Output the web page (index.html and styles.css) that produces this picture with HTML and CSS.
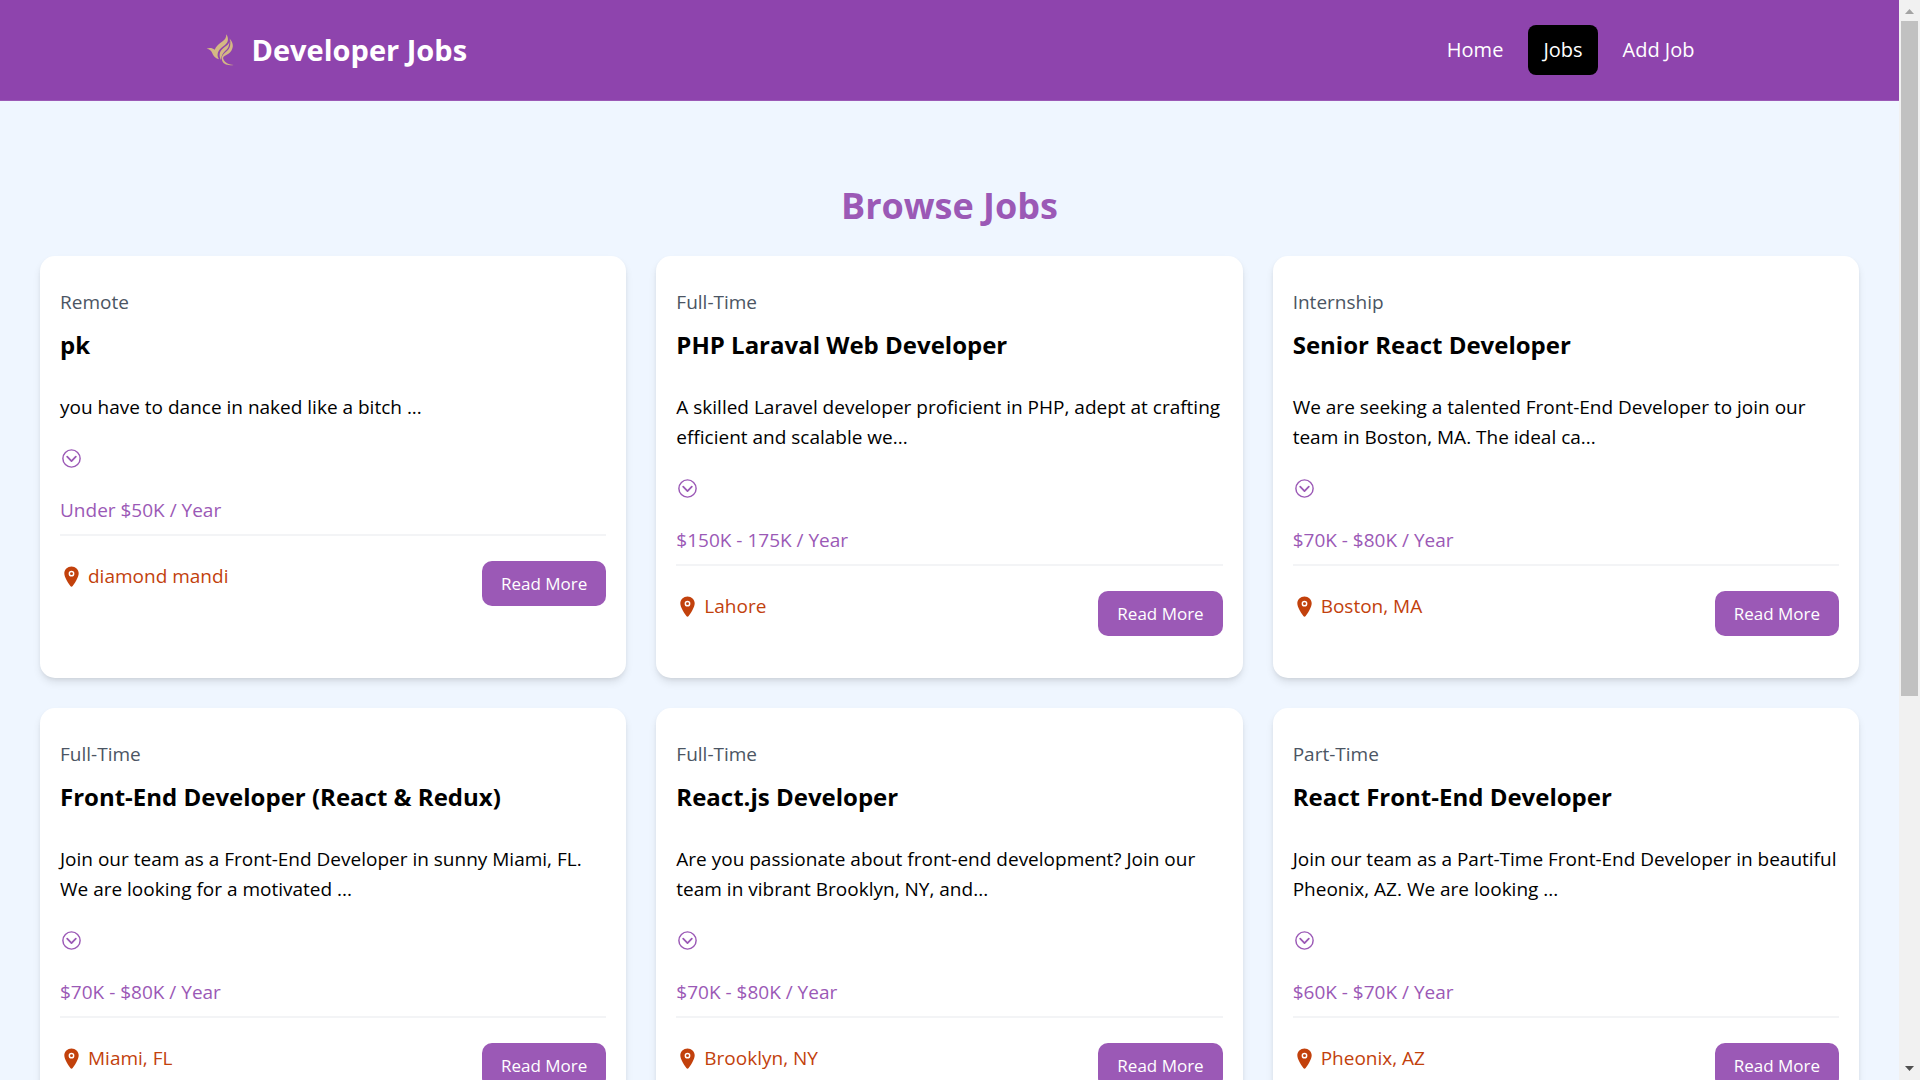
FILE: index.html
```html
<!DOCTYPE html>
<html lang="en">
<head>
<meta charset="utf-8">
<title>Developer Jobs</title>
<link rel="stylesheet" href="styles.css">
</head>
<body>
<svg class="sprite" aria-hidden="true">
  <symbol id="down" viewBox="0 0 512 512"><path d="M352 216l-96 96-96-96" fill="none" stroke="currentColor" stroke-width="40" stroke-linecap="round" stroke-linejoin="round"/><path d="M448 256c0-106-86-192-192-192S64 150 64 256s86 192 192 192 192-86 192-192z" fill="none" stroke="currentColor" stroke-width="32" stroke-miterlimit="10"/></symbol>
  <symbol id="pin" viewBox="0 0 512 512"><circle cx="256" cy="192" r="32"/><path d="M256 32c-88.220 0-160 68.650-160 153 0 40.170 18.310 93.590 54.420 158.780 29 52.340 62.550 99.670 80 123.220a31.750 31.750 0 0 0 51.220 0c17.420-23.550 51-70.880 80-123.220C397.690 278.610 416 225.190 416 185c0-84.350-71.780-153-160-153zm0 224a64 64 0 1 1 64-64 64.070 64.070 0 0 1-64 64z"/></symbol>
</svg>
<div class="viewport">
  <div class="page">
    <header class="navbar">
      <div class="navbar-inner">
        <a class="brand" href="#">
          <svg class="logo" viewBox="-31 0 150 150" aria-hidden="true">
            <path d="M19 71c7-3 17-3 24 3 4-10 14-18 24-25 8-6 11-12 11-21 8 12 6 24-4 32-11 8-20 15-22 27-1 6 1 11 4 16-12-3-17-11-20-18-3-8-8-13-17-14z"/>
            <path d="M88 38c2 12-3 19-12 26-11 8-18 15-18 27 0 5 1 9 4 14 1-13 5-20 13-28 8-7 13-13 13-39z"/>
            <path d="M89 42c10 12 11 24 4 35-5 8-12 11-19 15-6 3-7 7-4 12 6 10 15 14 30 16-20 3-32-3-35-14-3-12 4-19 14-27 9-8 13-17 10-37z"/>
          </svg>
          <span>Developer Jobs</span>
        </a>
        <nav class="links">
          <a href="#">Home</a>
          <a class="active" href="#" aria-current="page">Jobs</a>
          <a href="#">Add Job</a>
        </nav>
      </div>
    </header>
    <main class="jobs">
      <h1>Browse Jobs</h1>
      <div class="grid">
        <article class="card">
          <p class="type">Remote</p>
          <h2>pk</h2>
          <p class="desc">you have to dance in naked like a bitch ...</p>
          <button class="expand" aria-label="Show more"><svg><use href="#down"/></svg></button>
          <p class="salary">Under $50K / Year</p>
          <div class="foot"><p class="place"><svg><use href="#pin"/></svg>diamond mandi</p><a class="more" href="#">Read More</a></div>
        </article>
        <article class="card">
          <p class="type">Full-Time</p>
          <h2>PHP Laraval Web Developer</h2>
          <p class="desc">A skilled Laravel developer proficient in PHP, adept at crafting efficient and scalable we...</p>
          <button class="expand" aria-label="Show more"><svg><use href="#down"/></svg></button>
          <p class="salary">$150K - 175K / Year</p>
          <div class="foot"><p class="place"><svg><use href="#pin"/></svg>Lahore</p><a class="more" href="#">Read More</a></div>
        </article>
        <article class="card">
          <p class="type">Internship</p>
          <h2>Senior React Developer</h2>
          <p class="desc">We are seeking a talented Front-End Developer to join our team in Boston, MA. The ideal ca...</p>
          <button class="expand" aria-label="Show more"><svg><use href="#down"/></svg></button>
          <p class="salary">$70K - $80K / Year</p>
          <div class="foot"><p class="place"><svg><use href="#pin"/></svg>Boston, MA</p><a class="more" href="#">Read More</a></div>
        </article>
        <article class="card">
          <p class="type">Full-Time</p>
          <h2>Front-End Developer (React &amp; Redux)</h2>
          <p class="desc">Join our team as a Front-End Developer in sunny Miami, FL. We are looking for a motivated ...</p>
          <button class="expand" aria-label="Show more"><svg><use href="#down"/></svg></button>
          <p class="salary">$70K - $80K / Year</p>
          <div class="foot"><p class="place"><svg><use href="#pin"/></svg>Miami, FL</p><a class="more" href="#">Read More</a></div>
        </article>
        <article class="card">
          <p class="type">Full-Time</p>
          <h2>React.js Developer</h2>
          <p class="desc">Are you passionate about front-end development? Join our team in vibrant Brooklyn, NY, and...</p>
          <button class="expand" aria-label="Show more"><svg><use href="#down"/></svg></button>
          <p class="salary">$70K - $80K / Year</p>
          <div class="foot"><p class="place"><svg><use href="#pin"/></svg>Brooklyn, NY</p><a class="more" href="#">Read More</a></div>
        </article>
        <article class="card">
          <p class="type">Part-Time</p>
          <h2>React Front-End Developer</h2>
          <p class="desc">Join our team as a Part-Time Front-End Developer in beautiful Pheonix, AZ. We are looking ...</p>
          <button class="expand" aria-label="Show more"><svg><use href="#down"/></svg></button>
          <p class="salary">$60K - $70K / Year</p>
          <div class="foot"><p class="place"><svg><use href="#pin"/></svg>Pheonix, AZ</p><a class="more" href="#">Read More</a></div>
        </article>
      </div>
    </main>
  </div>
  <div class="scrollbar" aria-hidden="true">
    <svg viewBox="0 0 21 21"><path d="M6 14l4.500-5 4.500 5z" fill="#a3a3a3"/></svg>
    <div class="track"><div class="thumb"></div></div>
    <svg viewBox="0 0 21 21"><path d="M6 7l4.500 5 4.500-5z" fill="#505050"/></svg>
  </div>
</div>
</body>
</html>
```
FILE: styles.css
```css
* { box-sizing: border-box; margin: 0; }
body {
  font-family: "Open Sans", "Noto Sans", sans-serif;
  font-size: 19px;
  line-height: 30px;
  color: #000;
}
a { color: inherit; text-decoration: none; }
.sprite { display: none; }

.viewport { display: flex; height: 100vh; overflow: hidden; }
.page { flex: 1; min-width: 0; height: 100%; overflow: hidden; background: #eff6ff; }

.navbar { background: #8e44ad; border-bottom: 1px solid #9b59b6; }
.navbar-inner {
  max-width: 1600px;
  height: 100px;
  margin: 0 auto;
  padding: 0 40px;
  display: flex;
  align-items: center;
  justify-content: space-between;
  color: #fff;
}
.brand { display: flex; align-items: center; gap: 12px; font-size: 29px; font-weight: 700; }
.logo { width: 50px; height: 50px; fill: #d4b884; }
.links { display: flex; gap: 10px; font-size: 20px; }
.links a { padding: 10px 15px; border-radius: 8px; }
.links .active { background: #000; }

.jobs { padding: 80px 40px 50px; }
h1 {
  padding-top: 2px;
  margin-bottom: 28px;
  font-size: 36px;
  line-height: 45px;
  text-align: center;
  color: #9b59b6;
}
.grid { display: grid; grid-template-columns: repeat(3, minmax(0, 1fr)); gap: 30px; }
.card {
  padding: 31px 20px 42px;
  background: #fff;
  border-radius: 15px;
  box-shadow: 0 5px 8px -1px rgba(0, 0, 0, .1), 0 2px 5px -2px rgba(0, 0, 0, .1);
}
.type { color: #4b5563; }
h2 { margin: 10px 0 30px; font-size: 24px; line-height: 35px; }
.expand { display: block; margin: 20px 0; padding: 5px 0; border: 0; background: none; color: #9b59b6; }
.expand svg { display: block; width: 23px; height: 23px; }
.salary { padding-bottom: 9px; border-bottom: 2px solid #f3f4f6; color: #9b59b6; }
.foot { display: flex; justify-content: space-between; align-items: flex-start; padding-top: 25px; }
.place { display: flex; align-items: center; gap: 5px; color: #c2410c; }
.place svg { width: 23px; height: 23px; fill: currentColor; }
.more {
  padding: 8px 19px 7px;
  border-radius: 10px;
  background: #9b59b6;
  color: #fff;
  font-size: 17px;
}

.scrollbar { width: 21px; display: flex; flex-direction: column; background: #f1f1f1; }
.scrollbar svg { width: 21px; height: 21px; }
.track { flex: 1; padding: 0 2px; }
.thumb { height: 65%; background: #c1c1c1; }
```
